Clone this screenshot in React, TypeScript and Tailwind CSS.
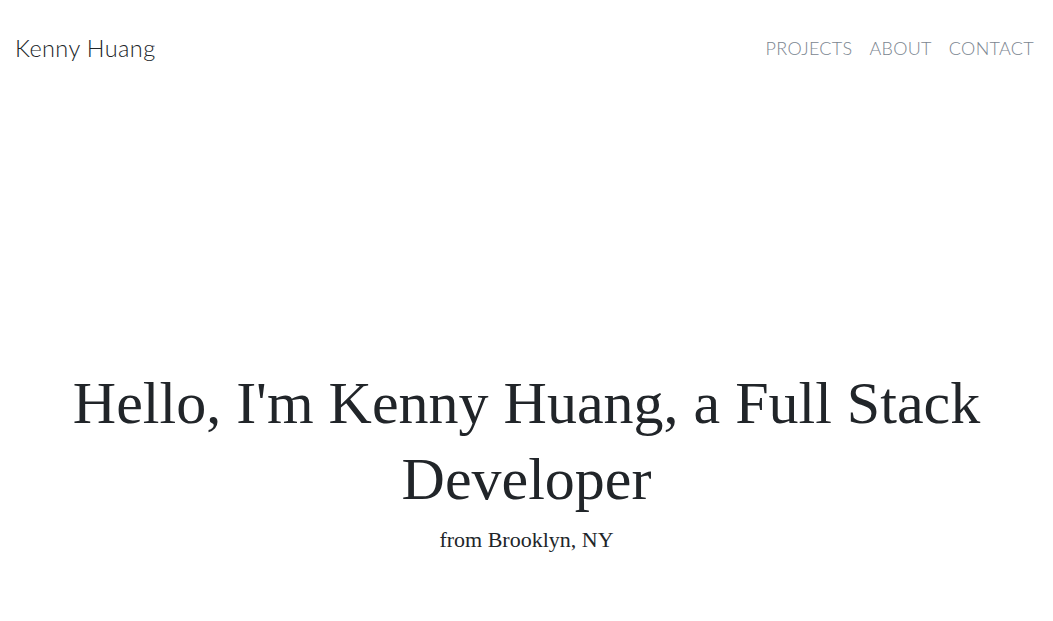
import React from "react";

export default function App() {
  return (
    <div className="min-h-screen bg-white">
      <header className="flex items-center justify-between pl-[15px] pr-[19px] pt-[33px]">
        <a className="text-[23.5px] leading-[30px] text-[#212529] font-['Lato',sans-serif] font-light tracking-[0.4px]">
          Kenny Huang
        </a>
        <nav className="flex gap-[17px] text-[18px] leading-[30px] text-[#7b8590] font-['Lato',sans-serif] font-light tracking-[0.3px]">
          <a>PROJECTS</a>
          <a>ABOUT</a>
          <a>CONTACT</a>
        </nav>
      </header>
      <main className="flex flex-col items-center pt-[302px] text-center text-[#212529] font-['Liberation_Serif',serif]">
        <h1 className="mx-auto max-w-[920px] text-[60px] leading-[76px]">
          Hello, I'm Kenny Huang, a Full Stack Developer
        </h1>
        <p className="mt-[8px] text-[22px] leading-[30px]">from Brooklyn, NY</p>
      </main>
    </div>
  );
}
